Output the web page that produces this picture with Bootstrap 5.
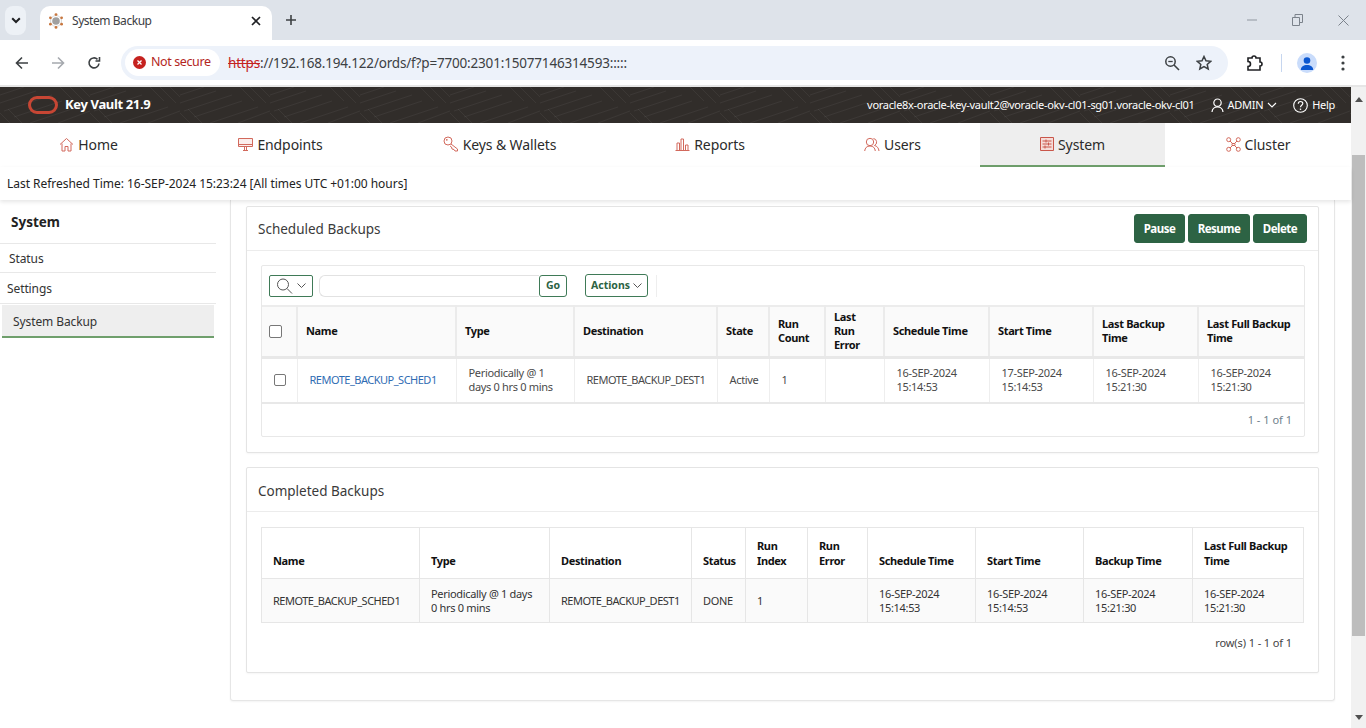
<!DOCTYPE html>
<html lang="en">
<head>
<meta charset="utf-8">
<meta name="viewport" content="width=device-width, initial-scale=1">
<title>System Backup</title>
<link href="https://cdn.jsdelivr.net/npm/bootstrap@5.3.2/dist/css/bootstrap.min.css" rel="stylesheet">
<style>
  html, body { height: 728px; overflow: hidden; }
  body { font-family: "Noto Sans", "Open Sans", sans-serif; font-size: 12px; color: #333; background: #fff; }
  svg { display: block; flex: none; }

  /* browser chrome */
  .tabstrip { height: 40px; background: #dee3ea; }
  .tab-list-btn { width: 21px; height: 29px; margin: 6px 14px 0 5px; background: #edf1f6; border-radius: 8px; }
  .chrome-tab { width: 232px; height: 34px; margin-top: 6px; padding: 0 11px 4px 8px; background: #fff; border-radius: 10px 10px 0 0; color: #3c4043; letter-spacing: -.45px; }
  .chrome-tab span { margin-left: 8px; width: 179px; }
  .new-tab { margin-left: 13px; }
  .win-controls { gap: 35px; padding-right: 17px; }
  .toolbar { height: 47px; border-bottom: 2px solid #e6e6e6; padding-left: 15px; }
  .nav-arrows { gap: 22px; width: 106px; }
  .omnibox { width: 1107px; height: 34px; background: #edf2fa; border-radius: 17px; padding: 0 16px 0 4px; }
  .secure-pill { width: 95px; height: 27px; background: #fff; border-radius: 14px; padding-left: 8px; gap: 5px; color: #b3261e; font-size: 12.5px; letter-spacing: -.4px; }
  .url { margin-left: 8px; padding-top: 1px; font-size: 13.5px; color: #3c4043; letter-spacing: -.18px; white-space: nowrap; }
  .url s { color: #c5221f; }
  .omni-icons { gap: 16px; }
  .ext-icons { width: 138px; padding: 0 15px 0 18px; }
  .sep { width: 1px; height: 18px; background: #c6d6ef; margin: 0 15px 0 17px; }
  .avatar { width: 20px; height: 20px; background: #c9dcfb; border-radius: 50%; overflow: hidden; margin-right: 24px; }

  /* app header */
  .viewport { height: 641px; }
  .app { width: 1351px; }
  .page-scroll { width: 15px; background: #f1f1f1; }
  .thumb { height: 481px; margin: 53px 1px 0 1px; background: #bdbdbd; }
  .arrow-up, .arrow-down { width: 0; height: 0; margin: 0 auto; border-left: 4px solid transparent; border-right: 4px solid transparent; }
  .arrow-up { border-bottom: 5px solid #505050; margin-top: 10px; }
  .arrow-down { border-top: 5px solid #505050; margin-top: 79px; }
  .okv-header { height: 36px; background: #312d2a; color: #fff; padding: 0 16px 0 28px; overflow: hidden; }
  .okv-texture { position: absolute; inset: 0; }
  .okv-header > div { position: relative; }
  .okv-brand { margin-left: 7px; font-size: 13px; font-weight: 700; letter-spacing: -.35px; }
  .okv-user { font-size: 11px; letter-spacing: -.3px; }

  /* main tabs */
  .okv-nav { height: 44px; }
  .okv-nav .nav-link { height: 44px; padding: 0 0 2px; gap: 4px; font-size: 14px; color: #2b2b2b; justify-content: center; letter-spacing: -.1px; }
  .okv-nav .nav-link:nth-child(1) { width: 177px; }
  .okv-nav .nav-link:nth-child(2) { width: 207px; }
  .okv-nav .nav-link:nth-child(3) { width: 231px; }
  .okv-nav .nav-link:nth-child(4) { width: 190px; }
  .okv-nav .nav-link:nth-child(5) { width: 175px; }
  .okv-nav .nav-link:nth-child(6) { width: 185px; }
  .okv-nav .nav-link:nth-child(7) { width: 186px; }
  .okv-nav .nav-link.active { background: #eee; border-bottom: 2px solid #6f9f6c; padding-bottom: 0; }
  .refresh { height: 33px; padding: 1px 0 0 7px; color: #222; box-shadow: 0 2px 4px rgba(0,0,0,.1); position: relative; z-index: 1; letter-spacing: -.03px; }

  /* left menu */
  .side { width: 216px; }
  .side-title { height: 44px; padding: 2px 0 0 11px; font-size: 13.5px; font-weight: 700; color: #222; border-bottom: 1px solid #e8e8e8; }
  .side .list-group-item { padding: 1px 0 0; border-color: #e8e8e8; color: #333; font-size: 12px; letter-spacing: -.1px; display: flex; align-items: center; }
  .side .side-status { height: 29px; padding-left: 9px; }
  .side .side-settings { height: 31px; padding-left: 7px; }
  .side .list-group-flush > .side-active { height: 33px; margin: 1px 2px 0; padding: 2px 0 0 11px; background: #eee; border: 0; border-bottom: 2px solid #6f9f6c; }

  /* content */
  .content { width: 1135px; padding: 0 16px 0 14px; }
  .outer-card { height: 501px; padding: 6px 15px 0; border: 1px solid #e6e6e6; border-top: 0; border-radius: 0 0 3px 3px; box-shadow: 0 1px 2px rgba(0,0,0,.05); }
  .okv-card { border-color: #e4e4e4; border-radius: 2px; box-shadow: 0 1px 2px rgba(0,0,0,.04); --bs-card-cap-bg: #fff; }
  .okv-card .card-header { padding: 1px 11px 0; height: 44px; border-color: #ececec; font-size: 13.5px; color: #3a3a3a; }
  .okv-card .card-body { padding: 0; }
  .card-sched { height: 247px; margin-bottom: 14px; }
  .card-done { height: 206px; }
  .card-done .card-header { padding-top: 3px; }
  .btn-okv { --bs-btn-padding-x: 0; --bs-btn-padding-y: 0; height: 29px; background: #2d6344; border: 1px solid #2d6344; border-radius: 3px; color: #fff; font-size: 11.5px; font-weight: 700; letter-spacing: -.5px; }
  .btn-okv:hover { background: #2d6344; color: #fff; }
  .b-pause { width: 51px; } .b-resume { width: 62px; } .b-delete { width: 54px; }
  .head-btns { gap: 3px; margin-top: -1px; }

  .report { margin: 14px 14px 0; width: 1044px; border: 1px solid #e8e8e8; height: 172px; border-radius: 2px; }
  .rep-bar { height: 39px; padding: 0 0 0 7px; }
  .btn-line { --bs-btn-padding-x: 0; --bs-btn-padding-y: 0; height: 22px; background: #fff; border: 1px solid #3f7a57; border-radius: 3px; color: #2d6344; font-size: 10.5px; font-weight: 700; gap: 3px; justify-content: center; }
  .btn-search { width: 44px; border-radius: 2px; }
  .btn-go { width: 28px; height: 22px; margin-right: 18px; }
  .btn-actions { width: 63px; height: 23px; }
  .search-input { width: 220px; height: 22px; margin-left: 6px; min-height: 0; padding: 0 6px; border: 1px solid #e2e2e2; border-right: 0; border-radius: 6px 0 0 6px; }
  .bar-sep { width: 1px; height: 22px; background: #eee; margin-left: 8px; }

  .okv-table { table-layout: fixed; margin: 0; font-size: 11px; letter-spacing: -.32px; --bs-table-bg: transparent; }
  .okv-table > :not(caption) > * > * { padding: 0 0 0 8px; vertical-align: middle; line-height: 14px; box-shadow: none; }
  .okv-table th { color: #111; font-weight: 700; letter-spacing: -.35px; }
  .caps { letter-spacing: -.5px; }

  .t-sched { width: 1042px; border-top: 2px solid #ececec; }
  .t-sched th { height: 51px; background: #fafafa; border: 0; border-right: 2px solid #ebebeb; border-bottom: 3px solid #e8e8e8; }
  .t-sched td { height: 46px; border: 0; border-right: 1px solid #eee; border-bottom: 2px solid #e8e8e8; color: #4a4a4a; }
  .t-sched > :not(caption) > * > td { padding-left: 12px; }
  .t-sched th:last-child, .t-sched td:last-child { border-right: 0; }
  .t-sched tr > th:first-child { padding-left: 7px; }
  .t-sched a { color: #2f6cb3; text-decoration: none; }
  .t-sched .form-check-input { width: 12px; height: 12px; margin: 0; border-color: #777; border-radius: 2px; }
  .t-sched .c-head { width: 13px; height: 13px; }
  .t-sched col:nth-child(1) { width: 35px; }
  .t-sched col:nth-child(2) { width: 159px; }
  .t-sched col:nth-child(3) { width: 118px; }
  .t-sched col:nth-child(4) { width: 143px; }
  .t-sched col:nth-child(5) { width: 52px; }
  .t-sched col:nth-child(6) { width: 56px; }
  .t-sched col:nth-child(7) { width: 59px; }
  .t-sched col:nth-child(8) { width: 105px; }
  .t-sched col:nth-child(9) { width: 104px; }
  .t-sched col:nth-child(10) { width: 105px; }
  .t-sched col:nth-child(11) { width: 106px; }
  .pager { height: 33px; padding-right: 12px; color: #6f7f8c; font-size: 11px; }

  .t-done-wrap { padding: 15px 14px 0 14px; }
  .t-done { width: 1042px; border: 1px solid #e6e6e6; }
  .t-done th, .t-done td { border: 1px solid #e6e6e6; }
  .okv-table.t-done > :not(caption) > * > * { padding-left: 11px; }
  .okv-table.t-done > thead > tr > th { height: 51px; line-height: 15px; padding-bottom: 10px; vertical-align: bottom; }
  .t-done td { height: 44px; background: #fafafa; color: #333; }
  .t-done col:nth-child(1) { width: 158px; }
  .t-done col:nth-child(2) { width: 130px; }
  .t-done col:nth-child(3) { width: 142px; }
  .t-done col:nth-child(4) { width: 54px; }
  .t-done col:nth-child(5) { width: 62px; }
  .t-done col:nth-child(6) { width: 60px; }
  .t-done col:nth-child(7) { width: 108px; }
  .t-done col:nth-child(8) { width: 108px; }
  .t-done col:nth-child(9) { width: 109px; }
  .t-done col:nth-child(10) { width: 111px; }
  .rows-info { height: 40px; padding: 0 12px 0 0; color: #444; font-size: 11px; letter-spacing: -.1px; }
</style>
</head>
<body>

<!-- browser frame -->
<div class="tabstrip d-flex">
  <div class="tab-list-btn d-flex align-items-center justify-content-center">
    <svg width="10" height="7" viewBox="0 0 10 7"><path d="M1.2 1.2 5 5l3.8-3.8" fill="none" stroke="#202124" stroke-width="2"/></svg>
  </div>
  <div class="chrome-tab d-flex align-items-center">
    <svg width="16" height="16" viewBox="0 0 16 16"><circle cx="8" cy="8" r="5.5" fill="none" stroke="#d8d8d8"/><circle cx="8" cy="8" r="3.8" fill="#a0a0a0"/><g fill="#c8773f"><circle cx="8" cy="1.6" r="1.4"/><circle cx="8" cy="14.4" r="1.4"/><circle cx="2.4" cy="4.8" r="1.4"/><circle cx="13.6" cy="4.8" r="1.4"/><circle cx="2.4" cy="11.2" r="1.4"/><circle cx="13.6" cy="11.2" r="1.4"/></g></svg>
    <span>System Backup</span>
    <svg width="10" height="10" viewBox="0 0 10 10"><path d="m1 1 8 8M9 1 1 9" stroke="#202124" stroke-width="1.7"/></svg>
  </div>
  <div class="new-tab d-flex align-items-center">
    <svg width="12" height="12" viewBox="0 0 12 12"><path d="M6 1v10M1 6h10" stroke="#3c4043" stroke-width="1.6"/></svg>
  </div>
  <div class="win-controls ms-auto d-flex align-items-center">
    <svg width="10" height="10" viewBox="0 0 10 10"><path d="M0 5h10" stroke="#9097a0"/></svg>
    <svg width="11" height="12" viewBox="0 0 11 12"><path d="M.5 3.5h7v8h-7zM3 3.5v-3h7.5v8h-3" fill="none" stroke="#7b828b"/></svg>
    <svg width="11" height="11" viewBox="0 0 11 11"><path d="m.5.5 10 10M10.5.5l-10 10" stroke="#7b828b"/></svg>
  </div>
</div>

<div class="toolbar d-flex align-items-center">
  <div class="nav-arrows d-flex align-items-center">
    <svg width="14" height="14" viewBox="0 0 14 14"><path d="M13 7H2M7 1.5 1.5 7 7 12.5" fill="none" stroke="#3c4043" stroke-width="1.6"/></svg>
    <svg width="14" height="14" viewBox="0 0 14 14"><path d="M1 7h11M7 1.5 12.5 7 7 12.5" fill="none" stroke="#a5a9ae" stroke-width="1.6"/></svg>
    <svg width="14" height="14" viewBox="0 0 14 14"><path d="M12 7.5A5 5 0 1 1 10.5 3.3M12.5 1v4h-4" fill="none" stroke="#3c4043" stroke-width="1.6"/></svg>
  </div>
  <div class="omnibox d-flex align-items-center">
    <div class="secure-pill d-flex align-items-center">
      <svg width="13" height="13" viewBox="0 0 13 13"><circle cx="6.5" cy="6.5" r="6.5" fill="#c5221f"/><path d="m4.500 4.500 4 4m0-4-4 4" stroke="#fff" stroke-width="1.3"/></svg>
      Not secure
    </div>
    <div class="url"><s>https</s>://192.168.194.122/ords/f?p=7700:2301:15077146314593:::::</div>
    <div class="omni-icons ms-auto d-flex align-items-center">
      <svg width="16" height="16" viewBox="0 0 16 16"><circle cx="6.5" cy="6.5" r="4.7" fill="none" stroke="#3c4043" stroke-width="1.5"/><path d="m10 10 5 5" stroke="#3c4043" stroke-width="1.6"/><path d="M4.300 6.500h4.400" stroke="#3c4043" stroke-width="1.3"/></svg>
      <svg width="16" height="16" viewBox="0 0 16 16"><path d="m8 1.500 2 4.300 4.700.5-3.500 3.100 1 4.600L8 11.600l-4.200 2.400 1-4.600L1.300 6.300 6 5.800z" fill="none" stroke="#3c4043" stroke-width="1.5"/></svg>
    </div>
  </div>
  <div class="ext-icons d-flex align-items-center">
    <svg width="18" height="18" viewBox="0 0 18 18"><path d="M2 4h4a2 2 0 0 1 4 0h4v4a2 2 0 0 1 0 4v4H2v-3.500a2 2 0 0 0 0-5z" fill="none" stroke="#202124" stroke-width="1.6"/></svg>
    <div class="sep"></div>
    <div class="avatar d-flex justify-content-center">
      <svg width="20" height="20" viewBox="0 0 20 20"><circle cx="10" cy="7.5" r="3.3" fill="#0b57d0"/><path d="M3.800 17c0-3.500 2.800-5 6.200-5s6.200 1.500 6.200 5z" fill="#0b57d0"/></svg>
    </div>
    <svg width="4" height="16" viewBox="0 0 4 16"><g fill="#3c4043"><circle cx="2" cy="2" r="1.6"/><circle cx="2" cy="8" r="1.6"/><circle cx="2" cy="14" r="1.6"/></g></svg>
  </div>
</div>

<div class="viewport d-flex">
  <div class="app">
    <!-- dark banner -->
    <header class="okv-header position-relative d-flex align-items-center">
      <svg class="okv-texture" width="1351" height="36">
        <defs>
          <pattern id="weave" width="90" height="36" patternUnits="userSpaceOnUse">
            <g fill="none" stroke="#fff" stroke-opacity=".05">
              <path d="M0 8 24 0M0 16 36 4M4 24 52 8M14 30 62 14M30 36 78 20M58 36 90 24"/>
              <path d="M60 0 74 14M70 0 86 16M80 0 90 10M0 26 10 36M8 22 22 36"/>
            </g>
          </pattern>
        </defs>
        <rect width="1351" height="36" fill="url(#weave)"/>
      </svg>
      <div class="d-flex align-items-center">
        <svg width="30" height="18" viewBox="0 0 30 18"><rect x="1.5" y="1.5" width="27" height="15" rx="7.5" fill="none" stroke="#c74634" stroke-width="3"/></svg>
        <span class="okv-brand">Key Vault 21.9</span>
      </div>
      <div class="okv-user ms-auto d-flex align-items-center">
        <span>voracle8x-oracle-key-vault2@voracle-okv-cl01-sg01.voracle-okv-cl01</span>
        <svg class="ms-3" width="13" height="15" viewBox="0 0 13 15"><circle cx="6.5" cy="4.7" r="3.7" fill="none" stroke="#fff" stroke-width="1.2"/><path d="M1 14c.3-3 2-5 5.500-5s5.200 2 5.500 5" fill="none" stroke="#fff" stroke-width="1.2"/></svg>
        <span class="ms-1">ADMIN</span>
        <svg class="ms-1" width="10" height="6" viewBox="0 0 10 6"><path d="m1 1 4 4 4-4" fill="none" stroke="#fff" stroke-width="1.1"/></svg>
        <svg class="ms-3" width="15" height="15" viewBox="0 0 15 15"><circle cx="7.5" cy="7.5" r="6.8" fill="none" stroke="#fff" stroke-width="1.1"/><path d="M5.300 5.800c0-3 4.500-3 4.500-.3 0 1.700-2.300 1.700-2.300 3.700" fill="none" stroke="#fff" stroke-width="1.2"/><circle cx="7.5" cy="11.3" r=".8" fill="#fff"/></svg>
        <span class="ms-1">Help</span>
      </div>
    </header>

    <!-- main tabs -->
    <nav class="nav okv-nav flex-nowrap">
      <a class="nav-link d-flex align-items-center" href="#">
        <svg width="15" height="15" viewBox="0 0 15 15"><path d="M1 7.500 7.500 1.500l6.500 6M3 6.500V14h3V9.500h3V14h3V6.500" fill="none" stroke="#d2695c"/></svg>Home</a>
      <a class="nav-link d-flex align-items-center" href="#">
        <svg width="15" height="15" viewBox="0 0 15 15"><path d="M.5 1.500h14v8H.5z" fill="#fbeeec" stroke="#d2695c"/><path d="M.5 7.500h14M5 13.500h5M6.500 9.500v4M8.500 9.500v4" fill="none" stroke="#d2695c"/></svg>Endpoints</a>
      <a class="nav-link d-flex align-items-center" href="#">
        <svg width="16" height="16" viewBox="0 0 16 16"><circle cx="5" cy="5" r="4" fill="none" stroke="#d2695c"/><path d="m8 8 6.500 5v2h-2.500l-1-1.500L9 13l-.5-2L7 10" fill="none" stroke="#d2695c"/><circle cx="3.8" cy="3.8" r=".9" fill="#d2695c"/></svg>Keys &amp; Wallets</a>
      <a class="nav-link d-flex align-items-center" href="#">
        <svg width="15" height="15" viewBox="0 0 15 15"><path d="M.5 13.500h14M2 13.500V6h2.500v7.500M6 13.500V2h2.500v11.500M10.500 13.500V8H13v5.500" fill="none" stroke="#d2695c"/></svg>Reports</a>
      <a class="nav-link d-flex align-items-center" href="#">
        <svg width="16" height="15" viewBox="0 0 16 15"><circle cx="6" cy="5" r="3.7" fill="none" stroke="#d2695c"/><path d="M.7 14c.3-3 2-5 5.300-5s5 2 5.300 5M9.500 1.500a3.700 3.700 0 0 1 1 7c2.500.5 4.200 2.500 4.500 5.500" fill="none" stroke="#d2695c"/></svg>Users</a>
      <a class="nav-link active d-flex align-items-center" href="#">
        <svg width="14" height="14" viewBox="0 0 14 14"><path d="M.5.500h13v13H.5z" fill="#f6dcd8" stroke="#c9564a"/><path d="M2.500 4h9M2.500 7h9M2.500 10h9M6 2.500v3M8.500 5.500v3M5 8.500v3" fill="none" stroke="#c9564a"/></svg>System</a>
      <a class="nav-link d-flex align-items-center" href="#">
        <svg width="15" height="15" viewBox="0 0 15 15"><g fill="none" stroke="#d2695c"><circle cx="2.7" cy="2.7" r="2"/><circle cx="12.3" cy="2.7" r="2"/><circle cx="2.7" cy="12.3" r="2"/><circle cx="12.3" cy="12.3" r="2"/><path d="m4 4 2.500 2.500M11 4 8.500 6.500M4 11l2.500-2.500M11 11 8.500 8.500"/><path d="M6 6.500h3v2H6z"/></g></svg>Cluster</a>
    </nav>

    <div class="refresh d-flex align-items-center">Last Refreshed Time: 16-SEP-2024 15:23:24 [All times UTC +01:00 hours]</div>

    <div class="d-flex">
      <!-- left menu -->
      <aside class="side">
        <div class="side-title d-flex align-items-center">System</div>
        <div class="list-group list-group-flush">
          <a class="list-group-item side-status" href="#">Status</a>
          <a class="list-group-item side-settings" href="#">Settings</a>
          <a class="list-group-item side-active" href="#">System Backup</a>
        </div>
      </aside>

      <main class="content">
        <div class="outer-card">
          <!-- scheduled -->
          <section class="card okv-card card-sched">
            <div class="card-header d-flex align-items-center justify-content-between">
              <span>Scheduled Backups</span>
              <div class="head-btns d-flex">
                <button type="button" class="btn btn-okv b-pause">Pause</button>
                <button type="button" class="btn btn-okv b-resume">Resume</button>
                <button type="button" class="btn btn-okv b-delete">Delete</button>
              </div>
            </div>
            <div class="card-body">
              <div class="report">
                <div class="rep-bar d-flex align-items-center">
                  <button type="button" class="btn btn-line btn-search d-flex align-items-center">
                    <svg width="18" height="16" viewBox="0 0 18 16"><circle cx="7" cy="6.5" r="5.5" fill="none" stroke="#555"/><path d="m11 10.500 5 5" stroke="#555"/></svg>
                    <svg width="9" height="5" viewBox="0 0 9 5"><path d="m.5.500 4 4 4-4" fill="none" stroke="#555"/></svg>
                  </button>
                  <input class="form-control search-input" type="text" aria-label="Search">
                  <button type="button" class="btn btn-line btn-go">Go</button>
                  <button type="button" class="btn btn-line btn-actions d-flex align-items-center">Actions
                    <svg width="9" height="5" viewBox="0 0 9 5"><path d="m.5.500 4 4 4-4" fill="none" stroke="#555"/></svg>
                  </button>
                  <div class="bar-sep"></div>
                </div>
                <table class="table okv-table t-sched">
                  <colgroup><col><col><col><col><col><col><col><col><col><col><col></colgroup>
                  <thead>
                    <tr>
                      <th><input class="form-check-input c-head d-block" type="checkbox" aria-label="Select all"></th>
                      <th>Name</th><th>Type</th><th>Destination</th><th>State</th><th>Run<br>Count</th><th>Last<br>Run<br>Error</th>
                      <th>Schedule Time</th><th>Start Time</th><th>Last Backup<br>Time</th><th>Last Full Backup<br>Time</th>
                    </tr>
                  </thead>
                  <tbody>
                    <tr>
                      <td><input class="form-check-input d-block" type="checkbox" aria-label="Select row"></td>
                      <td class="caps"><a href="#">REMOTE_BACKUP_SCHED1</a></td>
                      <td>Periodically @ 1<br>days 0 hrs 0 mins</td>
                      <td class="caps">REMOTE_BACKUP_DEST1</td>
                      <td>Active</td>
                      <td>1</td>
                      <td></td>
                      <td>16-SEP-2024<br>15:14:53</td>
                      <td>17-SEP-2024<br>15:14:53</td>
                      <td>16-SEP-2024<br>15:21:30</td>
                      <td>16-SEP-2024<br>15:21:30</td>
                    </tr>
                  </tbody>
                </table>
                <div class="pager d-flex align-items-center justify-content-end">1 - 1 of 1</div>
              </div>
            </div>
          </section>

          <!-- completed -->
          <section class="card okv-card card-done">
            <div class="card-header d-flex align-items-center">Completed Backups</div>
            <div class="card-body">
              <div class="t-done-wrap">
                <table class="table okv-table t-done">
                  <colgroup><col><col><col><col><col><col><col><col><col><col></colgroup>
                  <thead>
                    <tr>
                      <th>Name</th><th>Type</th><th>Destination</th><th>Status</th><th>Run<br>Index</th><th>Run<br>Error</th>
                      <th>Schedule Time</th><th>Start Time</th><th>Backup Time</th><th>Last Full Backup<br>Time</th>
                    </tr>
                  </thead>
                  <tbody>
                    <tr>
                      <td class="caps">REMOTE_BACKUP_SCHED1</td>
                      <td>Periodically @ 1 days<br>0 hrs 0 mins</td>
                      <td class="caps">REMOTE_BACKUP_DEST1</td>
                      <td>DONE</td>
                      <td>1</td>
                      <td></td>
                      <td>16-SEP-2024<br>15:14:53</td>
                      <td>16-SEP-2024<br>15:14:53</td>
                      <td>16-SEP-2024<br>15:21:30</td>
                      <td>16-SEP-2024<br>15:21:30</td>
                    </tr>
                  </tbody>
                </table>
                <div class="rows-info d-flex align-items-center justify-content-end">row(s) 1 - 1 of 1</div>
              </div>
            </div>
          </section>
        </div>
      </main>
    </div>
  </div>

  <!-- page scrollbar -->
  <div class="page-scroll">
    <div class="arrow-up"></div>
    <div class="thumb"></div>
    <div class="arrow-down"></div>
  </div>
</div>

<script src="https://cdn.jsdelivr.net/npm/bootstrap@5.3.2/dist/js/bootstrap.bundle.min.js"></script>
</body>
</html>
